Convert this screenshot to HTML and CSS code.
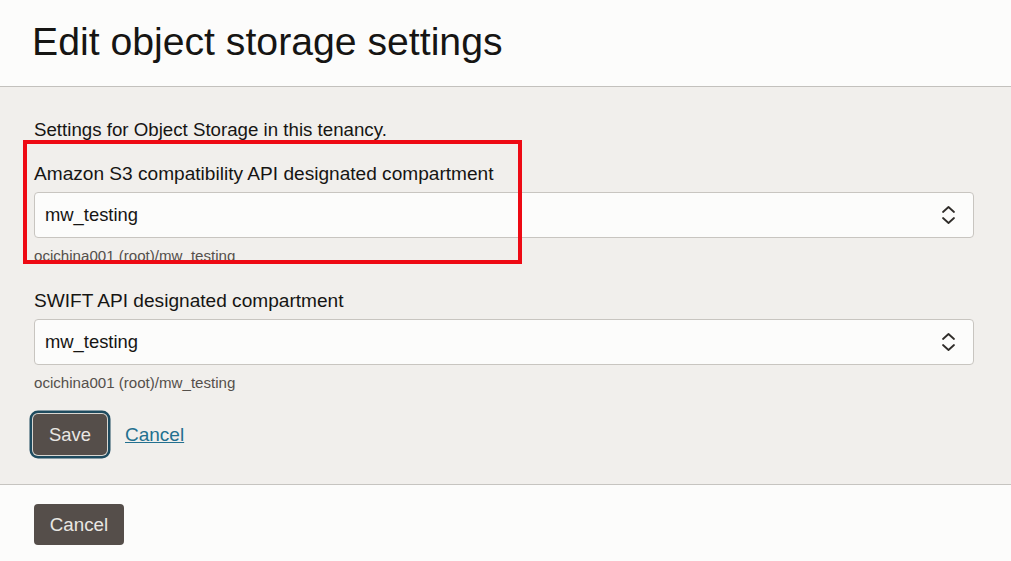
FILE: index.html
```html
<!DOCTYPE html>
<html lang="en">
<head>
<meta charset="utf-8">
<title>Edit object storage settings</title>
<link rel="stylesheet" href="styles.css">
</head>
<body>
<div class="page">
  <header class="header">
    <h1 class="title">Edit object storage settings</h1>
  </header>
  <main class="content">
    <p class="intro">Settings for Object Storage in this tenancy.</p>
    <div class="field field-first">
      <div class="annotation"></div>
      <label class="label">Amazon S3 compatibility API designated compartment</label>
      <div class="select">
        <span class="value">mw_testing</span>
        <svg class="chevrons" width="15" height="20" viewBox="0 0 15 20" aria-hidden="true">
          <path d="M2 7 L7.5 2 L13 7" />
          <path d="M2 13 L7.5 18 L13 13" />
        </svg>
      </div>
      <div class="helper">ocichina001 (root)/mw_testing</div>
    </div>
    <div class="field field-second">
      <label class="label">SWIFT API designated compartment</label>
      <div class="select">
        <span class="value">mw_testing</span>
        <svg class="chevrons" width="15" height="20" viewBox="0 0 15 20" aria-hidden="true">
          <path d="M2 7 L7.5 2 L13 7" />
          <path d="M2 13 L7.5 18 L13 13" />
        </svg>
      </div>
      <div class="helper">ocichina001 (root)/mw_testing</div>
    </div>
    <div class="actions">
      <button class="btn btn-focus">Save</button>
      <a class="link" href="#">Cancel</a>
    </div>
  </main>
  <footer class="footer">
    <button class="btn">Cancel</button>
  </footer>
</div>
</body>
</html>
```
FILE: styles.css
```css
* { box-sizing: border-box; }
html, body { margin: 0; padding: 0; }
body {
  font-family: "Liberation Sans", Arial, Helvetica, sans-serif;
  color: #161513;
  background: #fcfcfb;
}
.page {
  width: 1011px;
  height: 561px;
  display: flex;
  flex-direction: column;
  overflow: hidden;
}
.header {
  height: 87px;
  padding: 19px 32px 0;
  background: #fcfcfb;
  border-bottom: 1px solid #c3c1bd;
}
.title {
  margin: 0;
  font-size: 39.2px;
  line-height: 46px;
  font-weight: 400;
  color: #161513;
}
.content {
  background: #f1efec;
  padding: 32px 37px 26px 34px;
  height: 397px;
}
.intro {
  margin: 0;
  font-size: 18.7px;
  line-height: 22px;
  color: #161513;
}
.field { position: relative; }
.field-first { margin-top: 22px; }
.field-second { margin-top: 25px; }
.label {
  display: block;
  font-size: 19.1px;
  line-height: 22px;
  color: #161513;
}
.select {
  margin-top: 7px;
  height: 46px;
  border: 1px solid #c8c5c0;
  border-radius: 4px;
  background: #fcfcfb;
  display: flex;
  align-items: center;
  justify-content: space-between;
  padding: 0 17px 0 10px;
}
.value {
  font-size: 18.4px;
  color: #161513;
}
.chevrons {
  display: block;
  fill: none;
  stroke: #2f2c29;
  stroke-width: 1.8;
  stroke-linecap: round;
  stroke-linejoin: round;
}
.helper {
  margin-top: 9px;
  font-size: 15.1px;
  line-height: 18px;
  color: #55504b;
}
.annotation {
  position: absolute;
  left: -11px;
  top: -23px;
  width: 499px;
  height: 124px;
  border: 4px solid #ee0a14;
  pointer-events: none;
  z-index: 2;
}
.actions {
  margin-top: 22px;
  display: flex;
  align-items: center;
  gap: 18px;
}
.btn {
  font-family: "Liberation Sans", Arial, Helvetica, sans-serif;
  font-size: 18.4px;
  height: 41px;
  border: none;
  border-radius: 4px;
  background: #554e4a;
  color: #e9e7e3;
  padding: 0 15px;
}
.btn-focus {
  width: 74px;
  margin-left: -1px;
  padding: 0;
  border-radius: 5px;
  box-shadow: 0 0 0 1px #d9d6d1, 0 0 0 3.5px #1e4b5f;
}
.link {
  font-size: 19px;
  color: #23708f;
  text-decoration: underline;
}
.footer {
  flex: 1;
  border-top: 1px solid #c6c4c0;
  background: #fcfcfb;
  padding: 19px 34px 0;
}
.footer .btn { width: 90px; padding: 0; font-size: 18.8px; }
```
